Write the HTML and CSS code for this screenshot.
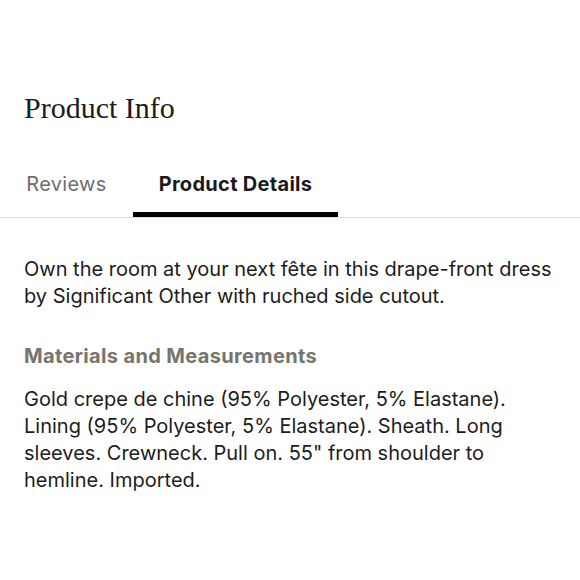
FILE: index.html
```html
<!DOCTYPE html>
<html>
<head>
<meta charset="utf-8">
<link rel="stylesheet" href="styles.css">
</head>
<body>
<h1 class="title">Product Info</h1>
<div class="tabs">
  <div class="tab tab-reviews">Reviews</div>
  <div class="tab tab-details active">Product Details</div>
</div>
<div class="content">
  <p class="desc">Own the room at your next fête in this drape-front dress by Significant Other with ruched side cutout.</p>
  <h2 class="subhead">Materials and Measurements</h2>
  <p class="materials">Gold crepe de chine (95% Polyester, 5% Elastane). Lining (95% Polyester, 5% Elastane). Sheath. Long sleeves. Crewneck. Pull on. 55" from shoulder to hemline. Imported.</p>
</div>
</body>
</html>
```
FILE: styles.css
```css
html, body {
  margin: 0;
  padding: 0;
  background: #fff;
}
body {
  width: 580px;
  font-family: Inter, "Liberation Sans", Arial, sans-serif;
  color: #1c1c1c;
}
.title {
  margin: 90px 0 0 24px;
  font-family: "Liberation Serif", "Times New Roman", serif;
  font-weight: normal;
  font-size: 30px;
  line-height: 36px;
  color: #1c1c1c;
}
.tabs {
  display: flex;
  margin-top: 46px;
  border-bottom: 1px solid #dcdcdc;
}
.tab {
  font-size: 20px;
  letter-spacing: 0.3px;
  line-height: 24px;
  padding-bottom: 16px;
  border-bottom: 5px solid transparent;
  text-align: center;
  color: #6e6e6e;
}
.tab-reviews {
  width: 133px;
}
.tab-details {
  width: 205px;
}
.tab.active {
  font-weight: bold;
  color: #1a1a1a;
  border-bottom-color: #000;
}
.content {
  padding: 0 24px;
}
.desc {
  margin: 38px 0 0;
  font-size: 20px;
  line-height: 27px;
}
.subhead {
  margin: 33px 0 0;
  font-size: 20px;
  letter-spacing: 0.35px;
  line-height: 27px;
  font-weight: bold;
  color: #76746d;
}
.materials {
  margin: 16px 0 0;
  font-size: 20px;
  line-height: 27px;
}
```
